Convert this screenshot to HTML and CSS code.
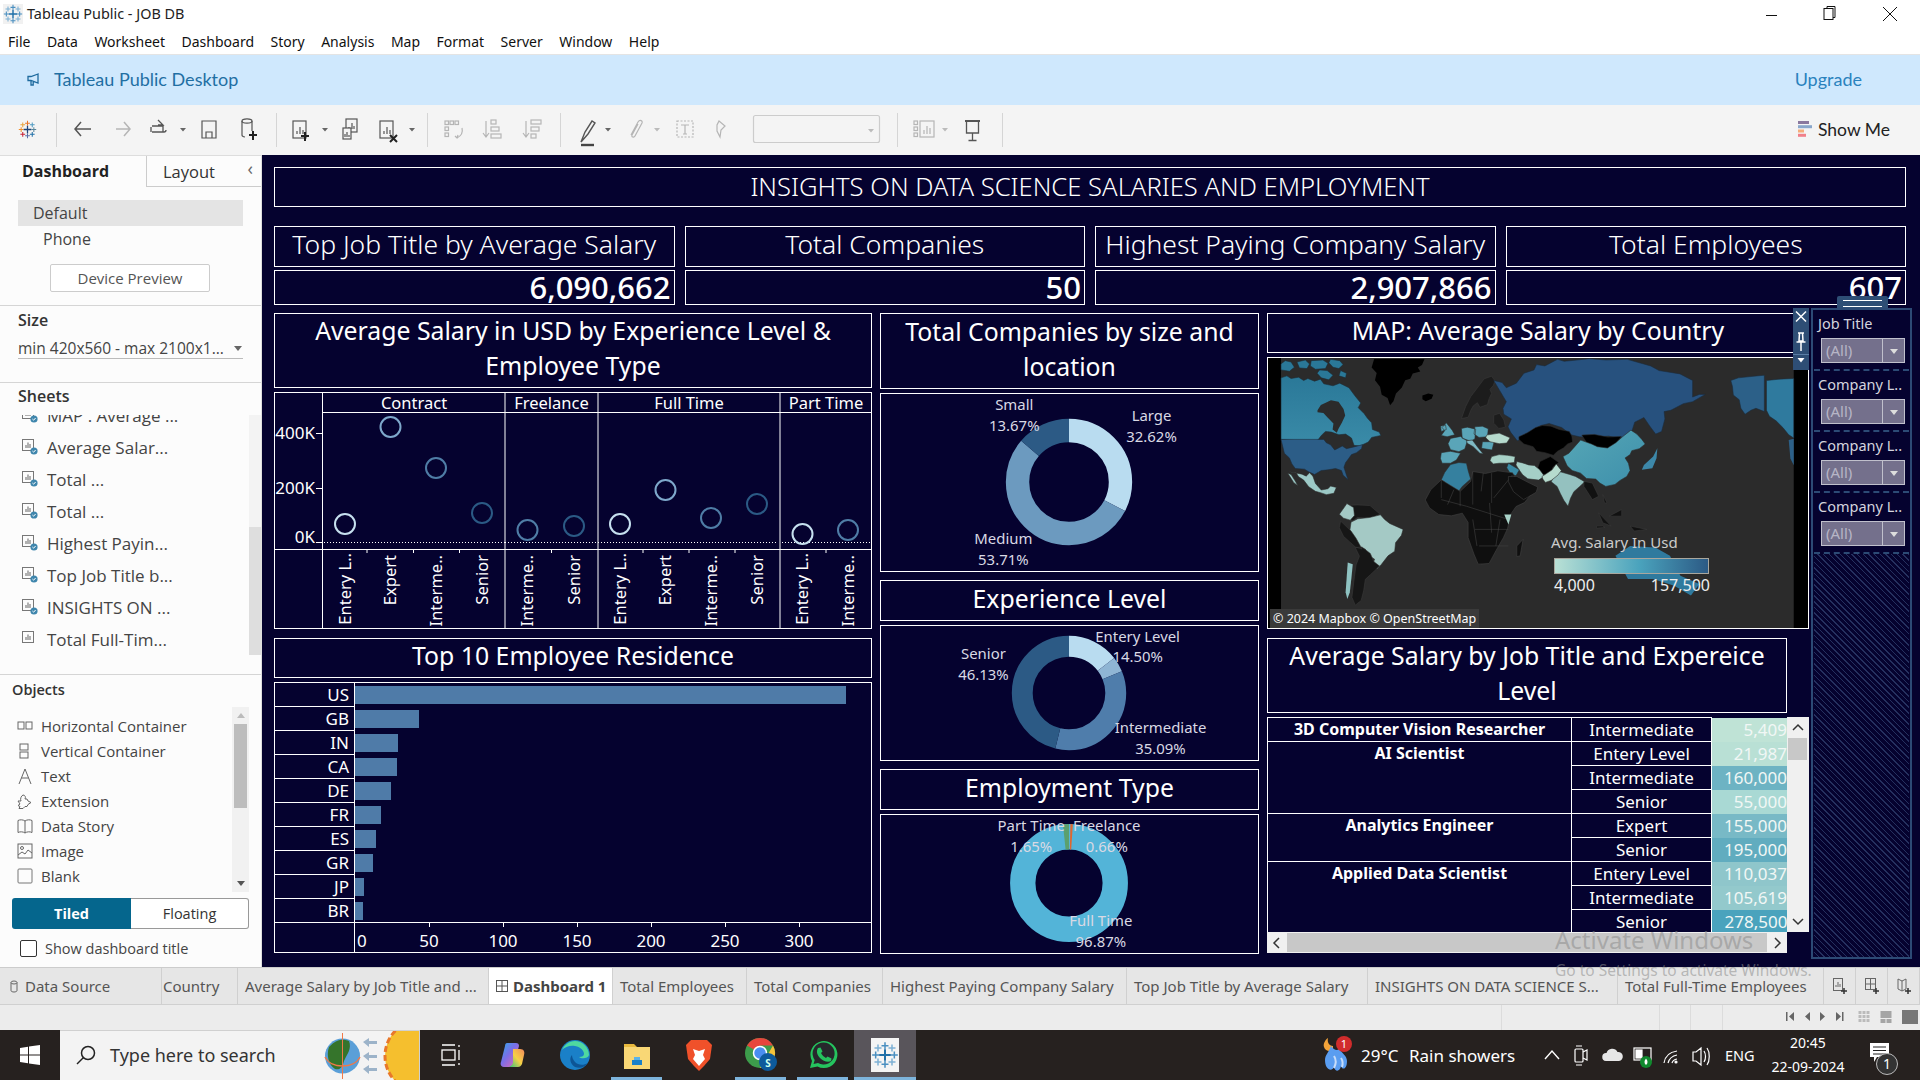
FILE: index.html
```html
<!DOCTYPE html>
<html lang="en">
<head>
<meta charset="utf-8">
<title>Tableau Public - JOB DB</title>
<link rel="stylesheet" href="styles.css">
</head>
<body>
<svg class="defs" width="0" height="0">
  <symbol id="logo" viewBox="0 0 24 24">
    <g fill="none" stroke-width="1.3">
      <path d="M12 7v10M7 12h10" stroke="#1f6fa8" stroke-width="1.700"/>
      <path d="M12 1v6M9 4h6M12 17v6M9 20h6M1 12h6M4 9v6M17 12h6M20 9v6" stroke="#4a8fc0"/>
      <path d="M6 3v6M3 6h6M18 3v6M15 6h6M6 15v6M3 18h6M18 15v6M15 18h6" stroke="#7db0d4"/>
    </g>
  </symbol>
  <symbol id="logoc" viewBox="0 0 24 24">
    <g fill="none" stroke-width="1.300">
      <path d="M12 7v10M7 12h10" stroke="#1f447a" stroke-width="1.600"/>
      <path d="M12 1v6M9 4h6" stroke="#e8762b"/>
      <path d="M12 17v6M9 20h6" stroke="#5a6ea8"/>
      <path d="M1 12h6M4 9v6" stroke="#f28e2b"/>
      <path d="M17 12h6M20 9v6" stroke="#59879b"/>
      <path d="M6 3v6M3 6h6" stroke="#e8a33d"/>
      <path d="M18 3v6M15 6h6" stroke="#4e9ac2"/>
      <path d="M6 15v6M3 18h6" stroke="#c72035"/>
      <path d="M18 15v6M15 18h6" stroke="#1f6fa8"/>
    </g>
  </symbol>
  <symbol id="sheet" viewBox="0 0 18 18">
    <rect x="1.500" y="1.500" width="11" height="11" fill="none" stroke="#777"/>
    <path d="M5 10V7M7 10V4.500M9 10V6" stroke="#666" stroke-width="1"/>
    <circle cx="13" cy="13" r="3.600" fill="#3f86ad"/>
    <path d="M11.400 13l1.200 1.200 2-2.200" stroke="#fff" stroke-width="1" fill="none"/>
  </symbol>
  <symbol id="sheetplain" viewBox="0 0 18 18">
    <rect x="1.500" y="1.500" width="11" height="11" fill="none" stroke="#777"/>
    <path d="M5 10V7M7 10V4.500M9 10V6" stroke="#666" stroke-width="1"/>
  </symbol>
</svg>

<header class="titlebar">
  <svg class="tb-logo"><use href="#logo"/></svg>
  <span class="tb-title">Tableau Public - JOB DB</span>
  <div class="winbtns">
    <svg width="160" height="20" viewBox="0 0 160 20" fill="none" stroke="#111" stroke-width="1"><path d="M16 11.500h11"/><rect x="74" y="4.500" width="9" height="11"/><path d="M77 4V2.500h8v11h-2"/><path d="M133 3l14 14M147 3l-14 14"/></svg>
  </div>
</header>

<nav class="menubar">
  <span>File</span><span>Data</span><span>Worksheet</span><span>Dashboard</span><span>Story</span><span>Analysis</span><span>Map</span><span>Format</span><span>Server</span><span>Window</span><span>Help</span>
</nav>

<div class="banner">
  <svg class="megaphone" viewBox="0 0 14 14" width="14" height="14" fill="none" stroke="#1e6a9e" stroke-width="1.300"><path d="M12 2L5 4.500H2v4h3l7 2.500zM5 8.500V13H7.200V9.200"/></svg>
  <span class="banner-text">Tableau Public Desktop</span>
  <span class="upgrade">Upgrade</span>
</div>

<div class="toolbar">
  <svg class="tools" width="1010" height="50" viewBox="0 1 1010 50">
    <use href="#logoc" x="18" y="16" width="19" height="19"/>
    <g stroke="#d5d5d5"><path d="M56.500 9v34M276.500 9v34M427.500 9v34M560.500 9v34M897.500 9v34M1002.500 9v34"/></g>
    <g fill="none" stroke="#555" stroke-width="1.500">
      <path d="M75 25h16M81 18l-6 7 6 7"/>
      <path d="M152 22h11v6M152 28h12a2 2 0 0 0 2-2M151 28v-5M158 16l5 5-5 0" stroke-width="1.300"/>
      <path d="M202 17h14v17h-14zM206 34v-6h6v6" stroke-width="1.200"/>
      <ellipse cx="247" cy="17" rx="5" ry="2.200" stroke-width="1.200"/><path d="M242 17v14a5 2 0 0 0 3 2M252 17v10" stroke-width="1.200"/>
    </g>
    <path d="M249 31h8M253 27v9" stroke="#222" stroke-width="2"/>
    <g fill="none" stroke="#555" stroke-width="1.200">
      <rect x="293" y="17" width="13" height="17"/><path d="M297 30v-3M300 30v-7M303 30v-4"/>
      <rect x="346" y="15" width="11" height="13"/><path d="M349 25v-2M352 25v-6M354 25v-3"/><rect x="343" y="24" width="8" height="11" fill="#f4f4f4"/><path d="M345 33v-3M347 33v-5M349 33v-2"/>
      <rect x="380" y="17" width="13" height="17"/><path d="M384 30v-3M387 30v-7M390 30v-4"/>
    </g>
    <path d="M301 32h8M305 28v9" stroke="#222" stroke-width="2"/>
    <path d="M390 31l7 7M397 31l-7 7" stroke="#222" stroke-width="2"/>
    <g fill="#666">
      <path d="M180 24h6l-3 3.500zM322 24h6l-3 3.500zM409 24h6l-3 3.500zM605 24h6l-3 3.500z"/>
    </g>
    <g fill="#bbb"><path d="M654 24h6l-3 3.500zM942 24h6l-3 3.500z"/></g>
    <g fill="none" stroke="#b5b5b5" stroke-width="1.200">
      <path d="M116 25h14M124 18l6 7-6 7" stroke-width="1.500"/>
      <rect x="445" y="17" width="3.500" height="3.500"/><rect x="450" y="17" width="3.500" height="3.500"/><rect x="455" y="17" width="3.500" height="3.500"/>
      <rect x="445" y="23" width="3.500" height="3.500"/><rect x="445" y="29" width="3.500" height="3.500"/>
      <path d="M462 24c1 4-1 8-5 10M455 32l2 2 1-3"/>
      <path d="M486 17v15M483 29l3 4 3-4"/><rect x="491" y="16" width="5" height="4"/><rect x="491" y="23" width="8" height="4"/><rect x="491" y="30" width="10" height="4"/>
      <path d="M526 17v15M523 29l3 4 3-4"/><rect x="531" y="16" width="10" height="4"/><rect x="531" y="23" width="8" height="4"/><rect x="531" y="30" width="5" height="4"/>
      <path d="M631 31l7-13c2-3 5-1 4 1l-7 13c-1 2-4 1-3-1l6-11"/>
      <rect x="677" y="17" width="16" height="16" stroke-dasharray="2 1.500"/><path d="M681 21h8M685 21v9M683 30h4"/>
      <path d="M719 17l6 5-4 4-1 7-3-6 0-6z"/>
      <rect x="753.500" y="11.500" width="126" height="27" rx="2" fill="#f4f4f4" stroke="#ccc"/>
      <rect x="914" y="17" width="3.500" height="3.500"/><rect x="914" y="23" width="3.500" height="3.500"/><rect x="914" y="29" width="3.500" height="3.500"/>
      <rect x="920" y="17" width="14" height="16"/><path d="M924 30v-4M927 30v-8M930 30v-6"/>
    </g>
    <path d="M868 25h6l-3 3.500z" fill="#bbb"/>
    <path d="M581 38l4-10 7-11 3 2-7 11z" fill="none" stroke="#555" stroke-width="1.400"/>
    <path d="M581 41h13" stroke="#444" stroke-width="2.400"/>
    <g fill="none" stroke="#555" stroke-width="1.300"><path d="M966.500 18v11h12V18M972.500 29v7M968.500 36.500h8"/></g>
    <path d="M965 17h15" stroke="#555" stroke-width="2"/>
  </svg>
  <div class="showme">
    <svg width="14" height="16" viewBox="0 0 14 16"><rect width="11" height="3" y="0" fill="#8a789e"/><rect width="14" height="3" y="4.200" fill="#8aa7cb"/><rect width="6" height="3" y="8.500" fill="#f5ad7a"/><rect width="8" height="3" y="12.800" fill="#f1808a"/></svg>
    <span>Show Me</span>
  </div>
</div>

<main class="main">
  <aside class="sidebar">
    <div class="sb-tabs">
      <div class="sb-tab active">Dashboard</div>
      <div class="sb-tab">Layout<span class="chev">‹</span></div>
    </div>
    <section class="sb-device">
      <div class="dev-row selected">Default</div>
      <div class="dev-row phone">Phone</div>
      <div class="dev-btn">Device Preview</div>
    </section>
    <section class="sb-size">
      <h3>Size</h3>
      <div class="size-select"><span>min 420x560 - max 2100x1...</span><i class="caret"></i></div>
    </section>
    <section class="sb-sheets">
      <h3>Sheets</h3>
      <div class="sheet-wrap">
        <ul class="sheet-list">
          <li><svg><use href="#sheet"/></svg>MAP : Average ...</li>
          <li><svg><use href="#sheet"/></svg>Average Salar...</li>
          <li><svg><use href="#sheet"/></svg>Total ...</li>
          <li><svg><use href="#sheet"/></svg>Total ...</li>
          <li><svg><use href="#sheet"/></svg>Highest Payin...</li>
          <li><svg><use href="#sheet"/></svg>Top Job Title b...</li>
          <li><svg><use href="#sheet"/></svg>INSIGHTS ON ...</li>
          <li><svg><use href="#sheetplain"/></svg>Total Full-Tim...</li>
        </ul>
        <div class="sheet-scroll"><div class="sheet-thumb"></div></div>
      </div>
    </section>
    <section class="sb-objects">
      <h3>Objects</h3>
      <div class="obj-wrap">
        <ul class="obj-list">
          <li><svg viewBox="0 0 16 16" fill="none" stroke="#666"><rect x="1" y="4" width="6" height="7"/><rect x="9" y="4" width="6" height="7"/></svg>Horizontal Container</li>
          <li><svg viewBox="0 0 16 16" fill="none" stroke="#666"><rect x="3" y="1" width="8" height="6"/><rect x="3" y="9" width="8" height="6"/></svg>Vertical Container</li>
          <li><svg viewBox="0 0 16 16" fill="none" stroke="#666"><path d="M2 16L8 1l6 15M4.500 10h7"/></svg>Text</li>
          <li><svg viewBox="0 0 16 16" fill="none" stroke="#666"><path d="M1 8h3c-1-2 0-5 2-6 2 0 3 2 2 4h2l1 2 3 1.500-3 2-1 2H8l-2 2H2l1-2-2-1 2-1.500z"/></svg>Extension</li>
          <li><svg viewBox="0 0 16 16" fill="none" stroke="#666"><path d="M8 3C6 1.500 3 1.500 1 2.500v12c2-1 5-1 7 .5 2-1.500 5-1.500 7-.5v-12C13 1.500 10 1.500 8 3zv12"/></svg>Data Story</li>
          <li><svg viewBox="0 0 16 16" fill="none" stroke="#666"><rect x="1" y="1" width="14" height="14"/><circle cx="5" cy="5" r="1.500"/><path d="M1 12l4-3 3 2 3-4 4 3"/></svg>Image</li>
          <li><svg viewBox="0 0 16 16" fill="none" stroke="#777"><rect x="1" y="1" width="14" height="14" rx="1"/></svg>Blank</li>
        </ul>
        <div class="obj-scroll"><i class="up"></i><div class="obj-thumb"></div><i class="down"></i></div>
      </div>
      <div class="toggle"><div class="tog on">Tiled</div><div class="tog">Floating</div></div>
      <label class="check"><span class="cbox"></span>Show dashboard title</label>
    </section>
  </aside>

  <div class="canvas">
    <div class="box head-title">INSIGHTS ON DATA SCIENCE SALARIES AND EMPLOYMENT</div>

    <div class="kpis">
      <div class="kpi"><div class="box kpi-t">Top Job Title by Average Salary</div><div class="box kpi-v">6,090,662</div></div>
      <div class="kpi"><div class="box kpi-t">Total Companies</div><div class="box kpi-v">50</div></div>
      <div class="kpi"><div class="box kpi-t">Highest Paying Company Salary</div><div class="box kpi-v">2,907,866</div></div>
      <div class="kpi"><div class="box kpi-t">Total Employees</div><div class="box kpi-v">607</div></div>
    </div>

    <div class="zones">
      <div class="col">
        <div class="box ttl t75">Average Salary in USD by Experience Level &amp; Employee Type</div>
        <div class="scatter">
          <svg width="598" height="237" viewBox="0 0 598 237" class="chart">
            <g stroke="#fff" stroke-width="1" fill="none">
              <rect x="0.500" y="0.500" width="597" height="236"/>
              <path d="M48.500 0v237M231 0v237M324 0v237M506 0v237M0 157.500h598M48.500 20.500H598"/>
              <path d="M42 41.500h6M42 96.500h6M42 150.500h6"/>
              <path d="M93 157v4M139.500 157v4M185.500 157v4M277.500 157v4M369 157v4M415 157v4M461 157v4M552 157v4"/>
              <path d="M50 150.500h181M231 150.500h93M324 150.500h180M508 150.500h90" stroke-dasharray="1 2"/>
            </g>
            <g class="c-head">
              <text x="140" y="17">Contract</text><text x="277.500" y="17">Freelance</text><text x="415" y="17">Full Time</text><text x="552" y="17">Part Time</text>
            </g>
            <g class="c-y">
              <text x="41" y="47">400K</text><text x="41" y="102">200K</text><text x="41" y="151">0K</text>
            </g>
            <g fill="none" stroke-width="2">
              <circle cx="71" cy="132" r="10" stroke="#c6e0ef"/>
              <circle cx="116.500" cy="35" r="10" stroke="#7ea8cb"/>
              <circle cx="162" cy="76" r="10" stroke="#4f7da6"/>
              <circle cx="208" cy="121" r="10" stroke="#2b5a85"/>
              <circle cx="253.500" cy="138" r="10" stroke="#4f7da6"/>
              <circle cx="300" cy="134" r="10" stroke="#2b5a85"/>
              <circle cx="346" cy="132" r="10" stroke="#c6e0ef"/>
              <circle cx="391.500" cy="98" r="10" stroke="#7ea8cb"/>
              <circle cx="437" cy="126" r="10" stroke="#4f7da6"/>
              <circle cx="483" cy="112" r="10" stroke="#2b5a85"/>
              <circle cx="528.500" cy="142" r="10" stroke="#c6e0ef"/>
              <circle cx="574" cy="138" r="10" stroke="#4f7da6"/>
            </g>
            <g class="c-rot">
              <text transform="translate(77 161) rotate(-90)">Entery L..</text>
              <text transform="translate(122 163) rotate(-90)">Expert</text>
              <text transform="translate(168 163) rotate(-90)">Interme..</text>
              <text transform="translate(214 163) rotate(-90)">Senior</text>
              <text transform="translate(259 163) rotate(-90)">Interme..</text>
              <text transform="translate(306 163) rotate(-90)">Senior</text>
              <text transform="translate(352 161) rotate(-90)">Entery L..</text>
              <text transform="translate(397 163) rotate(-90)">Expert</text>
              <text transform="translate(443 163) rotate(-90)">Interme..</text>
              <text transform="translate(489 163) rotate(-90)">Senior</text>
              <text transform="translate(534 161) rotate(-90)">Entery L..</text>
              <text transform="translate(580 163) rotate(-90)">Interme..</text>
            </g>
          </svg>
        </div>
        <div class="box ttl t40 mt9">Top 10 Employee Residence</div>
        <div class="box bars">
          <div class="bar-rows">
            <div class="bar-row"><span class="bl">US</span><span class="bt"><i style="width:491px"></i></span></div>
            <div class="bar-row"><span class="bl">GB</span><span class="bt"><i style="width:64px"></i></span></div>
            <div class="bar-row"><span class="bl">IN</span><span class="bt"><i style="width:43px"></i></span></div>
            <div class="bar-row"><span class="bl">CA</span><span class="bt"><i style="width:42px"></i></span></div>
            <div class="bar-row"><span class="bl">DE</span><span class="bt"><i style="width:36px"></i></span></div>
            <div class="bar-row"><span class="bl">FR</span><span class="bt"><i style="width:26px"></i></span></div>
            <div class="bar-row"><span class="bl">ES</span><span class="bt"><i style="width:21px"></i></span></div>
            <div class="bar-row"><span class="bl">GR</span><span class="bt"><i style="width:18px"></i></span></div>
            <div class="bar-row"><span class="bl">JP</span><span class="bt"><i style="width:9px"></i></span></div>
            <div class="bar-row"><span class="bl">BR</span><span class="bt"><i style="width:8px"></i></span></div>
          </div>
          <div class="bar-axis">
            <span class="axis-spacer"></span>
            <span class="tick zero">0</span><span class="tick"><b></b>50</span><span class="tick"><b></b>100</span><span class="tick"><b></b>150</span><span class="tick"><b></b>200</span><span class="tick"><b></b>250</span><span class="tick"><b></b>300</span>
          </div>
        </div>
      </div>

      <div class="col mid">
        <div class="box ttl t76">Total Companies by size and location</div>
        <div class="box donut d1">
          <svg width="379" height="179" viewBox="880 392 379 179" class="chart">
            <g fill="none" stroke-width="23.500" transform="rotate(-90 1069 481)">
              <circle cx="1069" cy="481" r="51.750" stroke="#b9dcf0" pathLength="100" stroke-dasharray="32.620 67.380"/>
              <circle cx="1069" cy="481" r="51.750" stroke="#6c9abf" pathLength="100" stroke-dasharray="53.710 46.290" stroke-dashoffset="-32.620"/>
              <circle cx="1069" cy="481" r="51.750" stroke="#2c5a85" pathLength="100" stroke-dasharray="13.670 86.330" stroke-dashoffset="-86.330"/>
            </g>
            <g class="c-lab">
              <text x="1014" y="410">Small</text><text x="1014" y="431">13.67%</text>
              <text x="1152" y="421">Large</text><text x="1152" y="442">32.62%</text>
              <text x="1003" y="544">Medium</text><text x="1003" y="565">53.71%</text>
            </g>
          </svg>
        </div>
        <div class="box ttl t41 mt9">Experience Level</div>
        <div class="box donut d2">
          <svg width="379" height="136" viewBox="880 624 379 136" class="chart">
            <g fill="none" stroke-width="21" transform="rotate(-90 1069 692)">
              <circle cx="1069" cy="692" r="47" stroke="#b9dcf0" pathLength="100" stroke-dasharray="14.500 85.500"/>
              <circle cx="1069" cy="692" r="47" stroke="#8fb5d4" pathLength="100" stroke-dasharray="4.280 95.720" stroke-dashoffset="-14.500"/>
              <circle cx="1069" cy="692" r="47" stroke="#4f7dab" pathLength="100" stroke-dasharray="35.090 64.910" stroke-dashoffset="-18.780"/>
              <circle cx="1069" cy="692" r="47" stroke="#2c5a85" pathLength="100" stroke-dasharray="46.130 53.870" stroke-dashoffset="-53.870"/>
            </g>
            <g class="c-lab">
              <text x="1138" y="642">Entery Level</text><text x="1138" y="662">14.50%</text>
              <text x="983" y="659">Senior</text><text x="983" y="680">46.13%</text>
              <text x="1161" y="733">Intermediate</text><text x="1161" y="754">35.09%</text>
            </g>
          </svg>
        </div>
        <div class="box ttl t41 mt9">Employment Type</div>
        <div class="box donut d3">
          <svg width="379" height="140" viewBox="880 813 379 140" class="chart">
            <g fill="none" stroke-width="25.500" transform="rotate(-90 1069 882)">
              <circle cx="1069" cy="882" r="46.500" stroke="#53b4d8"/>
              <circle cx="1069" cy="882" r="46.500" stroke="#e0662f" pathLength="100" stroke-dasharray="0.660 99.340" stroke-dashoffset="-0.400"/>
              <circle cx="1069" cy="882" r="46.500" stroke="#5ba06e" pathLength="100" stroke-dasharray="1.650 98.350" stroke-dashoffset="-98.350"/>
            </g>
            <g class="c-lab">
              <text x="1031" y="831">Part Time</text><text x="1031" y="852">1.65%</text>
              <text x="1107" y="831">Freelance</text><text x="1107" y="852">0.66%</text>
              <text x="1101" y="926">Full Time</text><text x="1101" y="947">96.87%</text>
            </g>
          </svg>
        </div>
      </div>

      <div class="col">
        <div class="box ttl t40">MAP: Average Salary by Country</div>
        <div class="box map">
          <svg class="mapsvg" viewBox="17 172 1287 816" preserveAspectRatio="none" stroke-width="1.500" stroke-linejoin="round">
            <defs><linearGradient id="cana" x1="0" y1="0" x2="0" y2="1"><stop offset="0" stop-color="#2a7898"/><stop offset="1" stop-color="#3a8ba8"/></linearGradient><linearGradient id="chn" x1="0" y1="0" x2="1" y2="1"><stop offset="0" stop-color="#57a7b6"/><stop offset="1" stop-color="#3d8fab"/></linearGradient></defs>
            <rect x="17" y="172" width="1287" height="816" fill="#000"/>
            <rect x="48" y="172" width="1222" height="816" fill="#2b2b2b"/>
            <path fill="#000" d="M270 175h120l-6 18-10 8 6 12-18 6-6 16-12 4-8 22-14 18-6 24-8 12-6-22-14-10-4-24-12-20 4-22-12-16zM385 285l14-6 12 4-4 12-14 8-8-6z"/>
            <path fill="url(#cana)" stroke="#1c2a35" d="M48 232l14-6 10 8 18-4 12 10 10-6 16 8 14-6 8 14 22 6 16-8 22 14 14 24 14 22-6 14 14 18 8 14 10 14 2 20 16 8 4 10-22 6-8 14-20 12-14-2-6-22-14-12-16 2-18-8-14-2-10 12-8 14-14 6L48 418z"/>
            <path fill="#2b2b2b" d="M135 330l8-16 14-8 10-6 18 4 12 22 4 20-8 22-8 18-4 12-10-10 2-18-14-18-10-14-14-2z"/>
            <path fill="#2a7898" stroke="#1c2a35" d="M48 190l10-10 14 4 8 16-12 12-20-4zM86 184l20-6 10 12-6 14-18-2zM120 180l28-2 12 10-6 16-24 2-12-10zM166 176l22 4 8 12-10 12-14-4-10-14zM140 208l18 2 14 14-10 14-18-6-10-14zM190 210l14 8-2 14-16-6z"/>
            <path fill="#2c5d87" stroke="#1a2a3a" d="M48 418h102l6 10 10 6 10 16 18-12 10 8 20-6 18-6-2 12-12 12-12 6-8 14-6 10-4 14 6 24 4 14-12-14-4-14-14-6-18 4-16 2-16 12-14-8-10-8-22-2-8-14-6-18-12-14z"/>
            <path fill="#9cc9c6" stroke="#2b2b2b" d="M65 515l33 8 10 6 8-10 8 10 6 22 14 20 16-4 6-8 14 4-6 18-18 4-14-6-12-4-16-14-12-20-12-10-6-12zM64 520l8 4 10 20 6 14-10-10-8-16z"/>
            <path fill="#161616" stroke="#3a3a3a" d="M200 618l30-2 30 2 24 26-14 8-10 4-30-2-10 10-12-4-8-20z"/>
            <path fill="#a4c9c5" stroke="#2b2b2b" d="M195 630l10-18 16 12 2 24-10 14-16-6-10-12z"/>
            <path fill="#a4c9c5" stroke="#2b2b2b" d="M215 668l16-10 28-4 26-8 10 14 12 12 32 18 -4 18-14 22-2 26-16 14-16 26-10 14-12-8 6-22-18-14-4-16-24-8-8-22-6-18z"/>
            <path fill="#161616" stroke="#3a3a3a" d="M190 665l25 30 12 22 14 32-16-6-14-16-14-16-10-26zM225 745l16-2 20 20 8 24 14 14-22 26-12 14-4 34-6 30-14 14-8-24 6-62 4-36 8-26z"/>
            <path fill="#8fc3c2" d="M207 790l12 5-3 40-4 45-6 20-4-20z"/>
            <path fill="#1c1c1c" stroke="#3a3a3a" d="M478 355l10-36 12-30 18-30 14-24 18-8 8 14-4 14-8 12 4 12-6 16-4 18-18 8-6-14-10 10-6 14-6 20z"/>
            <path fill="#1c1c1c" stroke="#3a3a3a" d="M555 345l14-6 10 20 4 22-16 4-12-16z"/>
            <path fill="#27517e" stroke="#1a2a3a" d="M555 240l20 6 10 16 24-14 18-30 24-10 6-16 20 4 30-20 16 6 60-8 40 4 50-2 56 20 20 14 50 10 30 20 0 50 16-8 14 0-30 22-22 6-30 20-16 4 2 22-8 38-14 8-14-24-14-26-22 14-6 24-14 20-22 4-20-6-40 4-30-2-20-6-22-22-30-12-20 6-24 18-20 22-12 6-16-26-6-16 8-24-18-14-2-18 8-20z"/>
            <path fill="#2c6088" stroke="#1a2a3a" d="M1120 240l18-8 30-4 32-4v110l-20-10-12 6-14 12-10-18-4-26-14-14-2-26z"/>
            <path fill="#2f7a9e" stroke="#1a2a3a" d="M1205 240l30-4 35-2v180l-12-10-14-22-16-20-16-14-7-18z"/>
            <path fill="#2c6088" d="M1258 420l12-4v80l-8-20z"/>
            <path fill="#000" stroke="#2b2b2b" d="M615 410l20-12 20-16 16-6 20 2 20 10 24 6 6 14 2 18-12 6-10 12-14 10-10 12-20-8-20-4-8-14-22-8-12-14z"/>
            <path fill="#000" stroke="#2b2b2b" d="M765 405l30-2 32 8 32-2-12 20-18 18-28-4-24-14z"/>
            <path fill="#000" stroke="#2b2b2b" d="M665 485l25-15 20 18-14 14-4 18-24 6-8-22z"/>
            <path fill="url(#chn)" stroke="#2b2b2b" d="M720 470l14-10 14-20 14-20 26 12 14 8 24 4 20-16 16-18 20-20 14 12 12 16 8 14-14 14-18 6-4 12-12 10 8 16 4 22-8 18-16 12-12 12-22 6-14-10-10-12-22-2-14-16-20-8-12-14z"/>
            <path fill="#3d88a9" d="M935 470l10-25-2 30-10 30-25 5 5-15z"/>
            <path fill="#94c1bf" stroke="#2b2b2b" d="M700 510l14 6 22 8 14 6 22 16-12 14-14 16-8 20-6 24-10-18-8-20-8-22-14-14 6-14z"/>
            <path fill="#a5cfc7" stroke="#2b2b2b" d="M610 485l14 4 14 6 14 2 12 12 12 20-14 12-26-4-12-12-8-14-8-16z"/>
            <path fill="#b6dbce" stroke="#2b2b2b" d="M670 530l10-8 14-12 10-18 12 20-8 14-16 16-14 6-6-10z"/>
            <path fill="#a8d2c7" stroke="#2b2b2b" d="M550 470l18-6 20 2 18 4-2 18-18 2-18 0-14 2-8-10z"/>
            <path fill="#35809f" stroke="#2b2b2b" d="M430 540l8-22 14-24 20-6 18 2 4 22 6 26-20 22-8 14-18-12z"/>
            <path fill="#5aa5b8" stroke="#2b2b2b" d="M430 458l22-4 24 6-10 20-14 10-20 0-4-14zM452 415l24-6 16 14-6 24-14 8-20-6-6-18zM442 368l14 22 6 14-18 6-14-4 8-14-6-10zM478 385l14-4 20 6-2 30-10 6-20-8zM428 378l12-4 2 14-12 6zM510 380l18-2 14 8-2 24-20 2-12-10zM528 425l28 0-5 25-25-5z"/>
            <path fill="#7fb9c4" stroke="#2b2b2b" d="M490 422l14-2 12 20 14 22-8-2-16-20-14-10z"/>
            <path fill="#b6dbce" stroke="#2b2b2b" d="M538 405l30-6 26 14-8 16-18 2-22-6-10-12z"/>
            <path fill="#3a8aa5" stroke="#2b2b2b" d="M590 490l26 20-8 18-14-8-8-16z"/>
            <path fill="#0f0f0f" stroke="#444" d="M405 570l25-30 45 35 25-30 5-30 30 6 30-8 35 6 14 34 16 36 14-4-16 24-20 12-14 26-6 40-10 28-18 40-16 38-26 2-10-30-14-50 0-46-14-28-26 8-30-4-22-20-10-24z"/>
            <path fill="none" stroke="#444" d="M430 540l0 55M475 575l0 45M505 515l0 100M550 520l0 90M600 525l-45 70M490 620l100 40M510 690l80 0M520 740l70 0M430 600l60 20M545 610l5 90M505 660l10 80M570 660l-10 80M460 570l-15 45M530 520l-5 55"/>
            <path fill="#0f0f0f" stroke="#444" d="M590 530l20 0 30 20 20 12-4 16-30 22-24-24-12-30z"/>
            <path fill="#0f0f0f" stroke="#444" d="M610 740l15-20-7 50-8 2z"/>
            <path fill="#a8d2c7" d="M580 645l17 0-7 30z"/>
            <path fill="#111" stroke="#3a3a3a" d="M770 545l20 5 15 40-15 10-20-40zM805 640l30 40-20-10zM830 650l30-20 0 20zM880 680l40 10-30 5zM800 680l15 0 5 4-20 2zM815 585l10 25-6 0z"/>
            <path fill="#2f7a9e" d="M845 770l35-30 60 5 35 25 25 60 45 25-20 35-40-30-50-20-60 0z"/>
          </svg>
          <div class="legend">
            <div class="leg-title">Avg. Salary In Usd</div>
            <div class="leg-grad"></div>
            <div class="leg-labels"><span>4,000</span><span>157,500</span></div>
          </div>
          <div class="attrib">© 2024 Mapbox © OpenStreetMap</div>
        </div>
        <div class="box ttl t75 w520 mt9">Average Salary by Job Title and Expereice Level</div>
        <div class="tblwrap">
          <div class="tblleft">
            <div class="tblclip">
              <table>
                <colgroup><col class="c1"><col class="c2"><col class="c3"></colgroup>
                <tr><th>3D Computer Vision Researcher</th><td>Intermediate</td><td class="num n1">5,409</td></tr>
                <tr><th rowspan="3">AI Scientist</th><td>Entery Level</td><td class="num n2">21,987</td></tr>
                <tr><td>Intermediate</td><td class="num n3">160,000</td></tr>
                <tr><td>Senior</td><td class="num n4">55,000</td></tr>
                <tr><th rowspan="2">Analytics Engineer</th><td>Expert</td><td class="num n5">155,000</td></tr>
                <tr><td>Senior</td><td class="num n6">195,000</td></tr>
                <tr><th rowspan="3">Applied Data Scientist</th><td>Entery Level</td><td class="num n7">110,037</td></tr>
                <tr><td>Intermediate</td><td class="num n8">105,619</td></tr>
                <tr><td>Senior</td><td class="num n9">278,500</td></tr>
              </table>
            </div>
            <div class="hscroll">
              <svg width="20" height="21" viewBox="0 0 20 21"><path d="M12 6l-5 5 5 5" fill="none" stroke="#333" stroke-width="1.500"/></svg>
              <div class="hthumb"></div>
              <svg width="20" height="21" viewBox="0 0 20 21"><path d="M8 6l5 5-5 5" fill="none" stroke="#333" stroke-width="1.500"/></svg>
            </div>
          </div>
          <div class="vscroll">
            <svg width="22" height="21" viewBox="0 0 22 21"><path d="M6 13l5-5 5 5" fill="none" stroke="#333" stroke-width="1.500"/></svg>
            <div class="vthumb"></div>
            <svg width="22" height="21" viewBox="0 0 22 21"><path d="M6 8l5 5 5-5" fill="none" stroke="#333" stroke-width="1.500"/></svg>
          </div>
        </div>
      </div>
    </div>

    <div class="float-tab"></div>
    <div class="float-btns">
      <svg width="16" height="62" viewBox="0 0 16 62" fill="none" stroke="#fff"><path d="M3 3.500l10 10M13 3.500l-10 10" stroke-width="1.500"/><path d="M5 25h6M6.500 25l-.5 8h4l-.5-8M3.500 34h9M8 34v9" stroke-width="1.500"/><path d="M0 46.500h16" stroke="#5a7da5"/><path d="M4.500 50h7l-3.500 4.500z" fill="#fff" stroke="none"/></svg>
    </div>
    <aside class="filters">
      <div class="filter"><div class="f-l">Job Title</div><div class="f-i"><span class="f-all">(All)</span><span class="f-d"><i></i></span></div></div>
      <div class="filter"><div class="f-l">Company L..</div><div class="f-i"><span class="f-all">(All)</span><span class="f-d"><i></i></span></div></div>
      <div class="filter"><div class="f-l">Company L..</div><div class="f-i"><span class="f-all">(All)</span><span class="f-d"><i></i></span></div></div>
      <div class="filter"><div class="f-l">Company L..</div><div class="f-i"><span class="f-all">(All)</span><span class="f-d"><i></i></span></div></div>
      <div class="hatch"></div>
    </aside>
  </div>
</main>

<div class="tabs">
  <div class="tab t1"><svg width="8" height="13" viewBox="0 0 8 13" fill="none" stroke="#666"><ellipse cx="4" cy="2.500" rx="3" ry="1.500"/><path d="M1 2.500v8c0 2 6 2 6 0v-8"/></svg>Data Source</div>
  <div class="tab t2">Country</div>
  <div class="tab t3">Average Salary by Job Title and ...</div>
  <div class="tab t4"><svg width="12" height="12" viewBox="0 0 12 12" fill="none" stroke="#555"><rect x="0.500" y="0.500" width="11" height="11"/><path d="M6 0v12M0 6h12"/></svg>Dashboard 1</div>
  <div class="tab t5">Total Employees</div>
  <div class="tab t6">Total Companies</div>
  <div class="tab t7">Highest Paying Company Salary</div>
  <div class="tab t8">Top Job Title by Average Salary</div>
  <div class="tab t9">INSIGHTS ON DATA SCIENCE S...</div>
  <div class="tab t10">Total Full-Time Employees</div>
  <div class="tab-ic"><svg width="16" height="18" viewBox="0 0 16 18" fill="none" stroke="#666"><rect x="1.500" y="1.500" width="9" height="12"/><path d="M4 10V8M6 10V5M8 10V7"/><path d="M9 14h6M12 11v6" stroke="#333" stroke-width="1.500"/></svg></div>
  <div class="tab-ic"><svg width="16" height="18" viewBox="0 0 16 18" fill="none" stroke="#666"><rect x="1.500" y="1.500" width="10" height="11"/><path d="M6.500 1v11M1 7h11"/><path d="M9 14h6M12 11v6" stroke="#333" stroke-width="1.500"/></svg></div>
  <div class="tab-ic"><svg width="16" height="18" viewBox="0 0 16 18" fill="none" stroke="#666"><path d="M2 2l4 2 4-2v10l-4 2-4-2zM6 4v10"/><path d="M9 14h6M12 11v6" stroke="#333" stroke-width="1.500"/></svg></div>
</div>

<div class="status">
  <i class="sdiv s1"></i><i class="sdiv s2"></i><i class="sdiv s3"></i><i class="sdiv s4"></i>
  <svg class="nav" width="130" height="25" viewBox="0 0 130 25">
    <g fill="#666"><path d="M16 7h1.500v9H16zM24 7v9l-5-4.500zM40 7v9l-5-4.500zM50 7v9l5-4.500zM66 7v9l5-4.500zM72 7h1.500v9H72z"/></g>
    <g fill="#bbb"><rect x="88.500" y="6" width="3" height="3"/><rect x="92.500" y="6" width="3" height="3"/><rect x="96.500" y="6" width="3" height="3"/><rect x="88.500" y="10" width="3" height="3"/><rect x="92.500" y="10" width="3" height="3"/><rect x="96.500" y="10" width="3" height="3"/><rect x="88.500" y="14" width="3" height="3"/><rect x="92.500" y="14" width="3" height="3"/><rect x="96.500" y="14" width="3" height="3"/></g>
    <g fill="#a5a5a5"><rect x="110.500" y="6" width="11" height="7"/><rect x="110.500" y="14" width="5" height="4"/><rect x="116.500" y="14" width="5" height="4"/></g>
  </svg>
  <span class="bigview"></span>
</div>

<footer class="taskbar">
  <div class="start"><svg width="20" height="20" viewBox="0 0 20 20" fill="#fff"><path d="M0 3l8-1.200V9.500H0zM9 1.600L20 0v9.500H9zM0 10.500h8v7.700L0 17zM9 10.500h11V20L9 18.400z"/></svg></div>
  <div class="search">
    <svg width="22" height="22" viewBox="0 0 22 22" fill="none" stroke="#222" stroke-width="1.500"><circle cx="13" cy="9" r="6.500"/><path d="M8.500 13.500L2 20"/></svg>
    <span>Type here to search</span>
    <svg class="bing" width="100" height="50" viewBox="0 0 100 50">
      <circle cx="23.500" cy="25" r="17.500" fill="#5a9fd8"/>
      <path d="M10 16c8-9 16-8 20-6 3 8-2 13-5 20-2 8-5 9-9 8-6-4-9-13-6-22z" fill="#35742b"/>
      <path d="M23.500 2v46" stroke="#f07848" stroke-width="1"/>
      <path d="M6 26c6 12 29 12 35 0" stroke="#f07848" stroke-width="1.400" fill="none"/>
      <path d="M44 11l6-4v3h8v3h-8v3zM44 25l6-4v3h8v3h-8v3zM44 38l6-4v3h8v3h-8v3z" fill="#9cb3c9"/>
      <circle cx="102" cy="25" r="36" fill="#f5bf2e" stroke="#e8782a" stroke-width="3" stroke-dasharray="6 3"/>
    </svg>
  </div>
  <div class="slot"><svg width="20" height="22" viewBox="0 0 20 22" fill="none" stroke="#fff" stroke-width="1.300"><path d="M1 1h13M1 21h13"/><rect x="1" y="6" width="13" height="10"/><path d="M18 1v2M18 6v10M18 19v2"/></svg></div>
  <div class="slot"><svg width="30" height="30" viewBox="0 0 30 30"><defs><linearGradient id="cp" x1="0" y1="0" x2="1" y2="1"><stop offset="0" stop-color="#2ea9e8"/><stop offset=".45" stop-color="#7b6ee8"/><stop offset="1" stop-color="#f06aa8"/></linearGradient><linearGradient id="cp2" x1="0" y1="1" x2="1" y2="0"><stop offset="0" stop-color="#2ec27e"/><stop offset=".5" stop-color="#f7d046"/><stop offset="1" stop-color="#f28a5c"/></linearGradient></defs><path d="M9 3h9c2 0 3 1 3 3l-5 18c-1 2-2 3-4 3H6c-3 0-4-3-3-5L7 6c0-2 1-3 2-3z" fill="url(#cp)"/><path d="M15 9h7c4 0 5 3 4 6l-2 9c-1 2-2 3-4 3h-9c2-1 3-2 4-4z" fill="url(#cp2)"/></svg></div>
  <div class="slot"><svg width="30" height="30" viewBox="0 0 30 30"><circle cx="15" cy="15" r="15" fill="#1a80c8"/><path d="M29 15C29 7 22 1 15 1 9 1 4 5 2 10c3-3 8-5 13-4 6 1 9 5 9 8 0 2-2 3-5 3 2 2 9 2 10-2z" fill="#4fd8a0"/><path d="M12 15c-3 3-2 9 3 12 5 2 10 0 13-4-5 3-10 2-13-1-2-2-3-5-3-7z" fill="#0d5596"/></svg></div>
  <div class="slot run"><svg width="28" height="30" viewBox="0 0 28 30"><path d="M1 4h10l3 3H1z" fill="#e8b93e"/><rect x="1" y="7" width="26" height="22" fill="#f9d775"/><path d="M9 20h10v5H9z" fill="#1a80c8"/><path d="M11 17h6v3h-6z" fill="#5cb3e8"/></svg></div>
  <div class="slot"><svg width="28" height="32" viewBox="0 0 28 32"><path d="M6 1h16l5 5-2 14-6 7-5 5-5-5-6-7L1 6z" fill="#f0512a"/><path d="M8 10l6 2 6-2-2 6 2 4-6 7-6-7 2-4z" fill="#fff"/></svg></div>
  <div class="slot run"><svg width="32" height="34" viewBox="0 0 32 34"><circle cx="15" cy="15" r="15" fill="#3d9c4b"/><path d="M15 0a15 15 0 0 1 13 7.500H15z" fill="#e8453c"/><path d="M2 7.500A15 15 0 0 1 15 0v15z" fill="#e8453c"/><path d="M28 7.500A15 15 0 0 1 15 30z" fill="#f5c33b"/><circle cx="15" cy="15" r="6.500" fill="#4a8ef0" stroke="#fff" stroke-width="1.500"/><circle cx="23" cy="24" r="9" fill="#0d5a9c"/><text x="23" y="28.500" class="ch-s">S</text></svg></div>
  <div class="slot run"><svg width="32" height="32" viewBox="0 0 32 32"><path d="M3 29l2-7A13.500 13.500 0 1 1 10.500 27.500z" fill="#25c45e"/><path d="M6.500 25l1.200-4A11 11 0 1 1 11 24z" fill="#27282c"/><path d="M11 9l2.500-.5 2 4-1.500 1.500c1 2 3 4 5 5l1.500-1.500 4 2-.5 2.500c-3 2-8 0-11-3s-4-7-2-10z" fill="#25c45e"/></svg></div>
  <div class="slot active"><div class="tabsq"><svg width="28" height="28"><use href="#logo"/></svg></div></div>
  <div class="tray">
    <svg class="weather" width="32" height="40" viewBox="0 0 32 40"><path d="M12 12c-4 0-6-4-5-8-3 2-5 6-4 9 1 4 6 5 9 3z" fill="#f2a33a"/><path d="M4 26c0-5 4-8 6-14 3 4 6 5 8 3 3 4 8 7 8 12 0 9-5 9-6 5-1 6-6 6-7 1-2 5-9 3-9-7z" fill="#5a9df0"/><path d="M13 22c2 3 2 8 0 12M20 24c2 3 2 6 1 9" stroke="#c7dcf8" stroke-width="2" fill="none"/><circle cx="23" cy="10" r="8" fill="#d12c2c"/><text x="23" y="14" class="badge1">1</text></svg>
    <span class="wtxt">29°C</span><span class="wtxt w2">Rain showers</span>
    <svg class="tray-ic" width="180" height="30" viewBox="0 0 180 30" fill="none" stroke="#fff" stroke-width="1.200">
      <path d="M3 19l7-8 7 8" stroke-width="1.400"/>
      <rect x="33" y="9" width="8" height="13" rx="1"/><path d="M34 6h6M34 25h6M41 12l4-2v10l-4-2"/>
      <path d="M64 21a4 4 0 0 1 .5-8 6 6 0 0 1 11-1 4.500 4.500 0 0 1 1.500 9z" fill="#e6e6e6" stroke="none"/>
      <rect x="92" y="8" width="17" height="12"/><rect x="94" y="10" width="6" height="8" fill="#fff"/><circle cx="104" cy="22" r="6" fill="#108a2e" stroke="none"/><path d="M104 18.500c-2 2-2 5 0 6.500 2-1.500 2-4.500 0-6.500z" fill="#fff" stroke="none"/>
      <path d="M122 23c1-7 6-11 13-12M126 23c1-4 4-7 9-8M130 23c.6-2 2-3.500 5-4"/><circle cx="134" cy="22" r="1" fill="#fff"/>
      <path d="M151 12h3l5-4v17l-5-4h-3zM162 11c2 3 2 8 0 11M165 8c3 4 3 13 0 17"/>
    </svg>
    <span class="lang">ENG</span>
    <div class="clock"><span>20:45</span><span>22-09-2024</span></div>
    <svg class="notif" width="32" height="40" viewBox="0 0 32 40"><path d="M3 5h19v14h-12l-3 5v-5H3z" fill="#fff"/><path d="M6 9h13M6 12.500h13M6 16h13" stroke="#222" stroke-width="1.200"/><circle cx="20" cy="26" r="10.500" fill="#333" stroke="#bbb"/><text x="20" y="31" class="notif-n">1</text></svg>
  </div>
</footer>

<div class="watermark"><span class="wm1">Activate Windows</span><span class="wm2">Go to Settings to activate Windows.</span></div>
</body>
</html>
```

FILE: styles.css
```css
*{box-sizing:border-box}
html,body{margin:0;padding:0}
html{height:1080px;overflow:hidden}
body{width:1920px;height:1080px;overflow:hidden;display:flex;flex-direction:column;position:relative;background:#fff;font-family:"Noto Sans",sans-serif;color:#222}
.defs{position:absolute}
ul{list-style:none;margin:0;padding:0}
h3{margin:0;font-weight:600}

.titlebar{height:27px;flex:none;display:flex;align-items:center;padding-left:3px;background:#fff}
.tb-logo{width:20px;height:20px;margin-right:4px;background:#f1f1f1}
.tb-title{font-size:14.400px;color:#222}
.winbtns{margin-left:auto;padding-right:10px;height:20px}
.menubar{height:28px;flex:none;display:flex;align-items:center;gap:16.500px;padding:2px 0 0 8px;font-size:14px;color:#111;border-bottom:1px solid #e4e4e4}
.banner{height:50px;flex:none;background:#cfe8fd;display:flex;align-items:center;padding:0 58px 2px 26px;font-family:Lato,sans-serif;font-size:18px;color:#1f6fa3}
.megaphone{margin-right:14px}
.upgrade{margin-left:auto;color:#2a82bd}

.toolbar{height:50px;flex:none;background:#f4f4f4;display:flex;align-items:center;justify-content:space-between;padding-right:30px}
.tools{display:block}
.showme{display:flex;align-items:center;gap:6px;font-family:Lato,sans-serif;font-size:17.500px;color:#222;padding-bottom:2px}

.main{height:812px;flex:none;display:flex;overflow:hidden}
.sidebar{width:262px;flex:none;background:#fcfcfc;border-right:1px solid #dedede;display:flex;flex-direction:column;font-family:"Open Sans",sans-serif;color:#333}
.sb-tabs{height:32px;display:flex;border-top:1px solid #ddd}
.sb-tab{font-size:16.500px;display:flex;align-items:center;padding-bottom:2px}
.sb-tab.active{width:146px;padding-left:22px;font-weight:700;color:#222;font-size:16px}
.sb-tab:not(.active){flex:1;border-left:1px solid #ccc;border-bottom:1px solid #ccc;padding-left:16px;padding-bottom:0;color:#333}
.chev{margin-left:auto;margin-right:8px;font-size:18px;color:#666;line-height:1;margin-top:-6px}
.sb-device{height:119px;padding-top:13px;border-bottom:1px solid #d5d5d5}
.dev-row{height:26px;margin:0 18px;display:flex;align-items:center;font-size:16px;color:#444;padding-left:15px}
.dev-row.selected{background:#e4e4e4}
.dev-row.phone{padding-left:25px}
.dev-btn{margin:12px 0 0 50px;width:160px;height:28px;border:1px solid #ccc;border-radius:2px;font-size:15px;display:flex;align-items:center;justify-content:center;color:#555;background:#fff}
.sb-size{height:77px;padding:4px 18px 0;border-bottom:1px solid #d5d5d5}
.sb-size h3,.sb-sheets h3{font-size:16px;line-height:20px;color:#333}
.size-select{height:22px;margin-top:7px;border-bottom:1px solid #bbb;display:flex;align-items:center;justify-content:space-between;font-size:15.500px;color:#444;white-space:nowrap}
.caret{width:0;height:0;border:4px solid transparent;border-top:5px solid #666;margin-top:5px;margin-right:1px}
.sb-sheets{height:292px;padding-top:3px;border-bottom:1px solid #d5d5d5}
.sb-sheets h3{padding-left:18px}
.sheet-wrap{margin-top:9px;height:240px;display:flex;overflow:hidden}
.sheet-list{flex:1;margin-top:-16px;font-size:17px;color:#444}
.sheet-list li{height:32px;display:flex;align-items:center;padding-left:21px;white-space:nowrap}
.sheet-list svg{width:18px;height:18px;margin-right:8px;flex:none}
.sheet-scroll{width:12px;background:#f3f3f3;display:flex;flex-direction:column;justify-content:flex-end}
.sheet-thumb{height:128px;background:#dedede}
.sb-objects{flex:1;padding:5px 12px 0}
.sb-objects h3{font-size:14.500px;line-height:20px;font-weight:600;color:#333}
.obj-wrap{margin-top:7px;height:185px;display:flex}
.obj-list{flex:1;font-size:15px;color:#444;padding-top:6px}
.obj-list li{height:25px;display:flex;align-items:center;padding-left:5px}
.obj-list svg{width:16px;height:16px;margin-right:8px;flex:none}
.obj-scroll{width:17px;background:#f1f1f1;position:relative;display:flex;flex-direction:column;align-items:center;justify-content:space-between;padding:5px 0}
.obj-thumb{position:absolute;top:17px;left:2px;width:13px;height:84px;background:#bdbdbd}
.up{width:0;height:0;border:4px solid transparent;border-bottom:5px solid #bbb;margin-top:-3px}
.down{width:0;height:0;border:4px solid transparent;border-top:5px solid #555;margin-bottom:-3px}
.toggle{margin-top:6px;height:31px;display:flex;width:237px;font-size:14.500px}
.tog{flex:1;display:flex;align-items:center;justify-content:center;border:1px solid #999;border-left:0;border-radius:0 3px 3px 0;background:#fff;font-weight:500;color:#333}
.tog.on{flex:none;width:119px;background:#05668d;color:#fff;font-weight:700;border:0;border-radius:3px 0 0 3px}
.check{display:flex;align-items:center;margin:10px 0 0 8px;font-size:14.500px;color:#444}
.cbox{width:17px;height:17px;border:1px solid #333;border-radius:2px;margin-right:8px;background:#fff}

.canvas{flex:1;background:#05022f;padding:12px 12px 0 12px;position:relative;color:#fff;min-width:0}
.box{border:1px solid #fff;display:flex;align-items:center;justify-content:center;text-align:center}
.head-title{height:40px;width:1632px;font-size:25.600px;font-weight:300;padding-bottom:2px}
.kpis{margin-top:19px;width:1632px;display:grid;grid-template-columns:repeat(4,400.500px);column-gap:10px}
.kpi{display:flex;flex-direction:column;gap:3px}
.kpi-t{height:41px;font-size:26.500px;font-weight:300;padding-bottom:5px;white-space:nowrap}
.kpi-v{height:35px;justify-content:flex-end;padding:0 3px 2px 0;font-size:31px;font-weight:500}
.zones{margin-top:8px;display:grid;grid-template-columns:598px 379px 542px;column-gap:8px;height:640px}
.col{display:flex;flex-direction:column;gap:4px;min-width:0}
.col.mid{gap:3.500px}
.ttl{font-size:24.800px;line-height:35px;padding:0 8px 5px;font-weight:400}
.t75{height:75px}.t76{height:76px}.t40{height:40px}.t41{height:41px}
.mt9{margin-top:5px}
.w520{width:520px}
.chart{display:block;font-family:"Noto Sans",sans-serif}
.scatter{height:237px;flex:none}
.c-head text{font-size:16.500px;fill:#fff;text-anchor:middle}
.c-y text{font-size:17px;fill:#fff;text-anchor:end}
.c-rot text{font-size:16.500px;fill:#fff;text-anchor:end}
.c-lab{transform:translateY(-1px)}
.c-lab text{font-size:15px;fill:#d9d9e4;text-anchor:middle}
.bars{height:271px;flex-direction:column;align-items:stretch;justify-content:flex-start;text-align:left}
.bar-row{height:24px;display:flex}
.bar-row:last-child{border-bottom:1px solid #fff}
.bl{width:80px;flex:none;border-right:1px solid #fff;border-bottom:1px solid #fff;text-align:right;padding-right:5px;font-size:17px;line-height:24px}
.bar-row:last-child .bl{border-bottom:0}
.bt{flex:1;display:flex;align-items:center}
.bt i{display:block;height:18px;background:#4f7ba8}
.bar-axis{flex:1;display:flex;font-size:17px}
.axis-spacer{width:80px;border-right:1px solid #fff;flex:none}
.tick{width:74px;text-align:center;position:relative;padding-top:6px;line-height:24px}
.tick.zero{width:37px;text-align:left;padding-left:2px}
.tick b{position:absolute;left:50%;top:0;width:1px;height:4px;background:#fff}
.d1{height:179px}.d2{height:136px}.d3{height:140px}
.map{height:272px;position:relative;overflow:hidden;display:block;text-align:left}
.mapsvg{width:100%;height:100%;display:block}
.legend{position:absolute;left:283px;top:174px;width:170px;font-size:15px;color:#ccc}
.leg-title{line-height:20px;white-space:nowrap}
.leg-grad{margin:6px 0 0 3px;height:16px;width:155px;background:linear-gradient(90deg,#b9e0d5 0,#4aa3bd 55%,#2c5a85 100%);border:1px solid #a9a79e}
.leg-labels{display:flex;justify-content:space-between;width:156px;margin-left:3px;line-height:22px;color:#eee;font-size:16px}
.attrib{position:absolute;left:2px;bottom:0;height:19px;padding:0 3px;background:#3a3a3a;font-size:12.500px;line-height:19px;color:#fff;white-space:nowrap}
.tblwrap{display:flex;height:236px}
.tblleft{width:520px}
.tblclip{height:215px;overflow:hidden}
table{border-collapse:collapse;table-layout:fixed;width:520px;font-size:17px}
.c1{width:304px}.c2{width:140px}.c3{width:76px}
tr{height:24px}
th,td{border:1px solid #fff;padding:0;text-align:center;line-height:22px;white-space:nowrap;overflow:hidden}
th{vertical-align:top;font-size:16px;font-weight:700}
.num{text-align:right;border:0;color:#f1f7f5;font-size:17px}
.n1{background:#bfe3d6}.n2{background:#b9e0d5}.n3{background:#6db3c3}.n4{background:#a9d9d4}.n5{background:#78b9c6}.n6{background:#61acbf}.n7{background:#8fc6cb}.n8{background:#93c9cc}.n9{background:#4aa3bd}
.hscroll{height:21px;background:#f0f0f0;display:flex;align-items:center;justify-content:space-between}
.hthumb{flex:1;height:19px;background:#c8c8c8}
.hscroll svg{flex:none}
.vscroll{width:22px;height:215px;background:#f0f0f0;display:flex;flex-direction:column;justify-content:space-between;position:relative}
.vthumb{position:absolute;top:21px;left:1px;width:19px;height:22px;background:#c8c8c8}

.float-tab{position:absolute;left:1575px;top:141px;width:51px;height:12px;background:#2e4e75;border-radius:2px 2px 0 0}
.float-tab::before{content:"";position:absolute;left:6px;right:6px;top:4px;height:5px;border-top:1px solid #fff;border-bottom:1px solid #fff}
.float-btns{position:absolute;left:1531px;top:153px;width:16px;height:62px;background:#2e4e75;line-height:0}
.filters{position:absolute;left:1549px;top:153px;width:101px;height:651px;border:2px solid #2c4a75;background:#05022f;display:flex;flex-direction:column;padding:0 1px}
.filter{height:61px;border-bottom:2px dashed #2c4a75;padding:2px 0 0 4px;flex:none}
.f-l{font-size:14.500px;line-height:22px;color:#d4d4de;white-space:nowrap}
.f-i{margin:4px 0 0 3px;width:84px;height:25px;background:#74708c;border:1px solid #c0c0cc;display:flex;font-size:15px}
.f-all{flex:1;padding-left:4px;color:#b7b5c6;line-height:22px}
.f-d{width:22px;border-left:1px solid #c0c0cc;display:flex;align-items:center;justify-content:center}
.f-d i{width:0;height:0;border:4px solid transparent;border-top:5px solid #ddd;margin-top:5px}
.hatch{flex:1;background:repeating-linear-gradient(45deg,#05022f 0 3px,#25305f 3px 4px)}

.tabs{height:38px;flex:none;background:#e6e6e6;display:flex;border-top:1px solid #ccc;border-bottom:1px solid #d0d0d0;font-size:15px;color:#555}
.tab{display:flex;align-items:center;justify-content:flex-start;padding-left:7px;border-right:1px solid #d0d0d0;white-space:nowrap;gap:5px;overflow:hidden;flex:none}
.t1{width:162px;padding-left:10px;gap:7px}.t2{width:76px;padding-left:1px}.t3{width:251px}.t4{width:124px;background:#fff;font-weight:700;color:#444}.t5{width:134px}.t6{width:136px}.t7{width:244px}.t8{width:241px}.t9{width:250px}.t10{width:206px}
.tab-ic{flex:none;width:32px;display:flex;align-items:center;justify-content:center;border-right:1px solid #d0d0d0}
.status{height:25px;flex:none;background:#ececec;display:flex;align-items:stretch}
.sdiv{width:1px;background:#dcdcdc;flex:none}
.s1{margin-left:1501px}.s2{margin-left:157px}.s3{margin-left:30px}.s4{margin-left:31px}
.nav{flex:none;margin-left:auto;margin-right:2px}
.bigview{width:16px;height:14px;background:#777;margin:5px 2px 0 0;flex:none}

.taskbar{height:50px;flex:none;background:#26211f;display:flex;align-items:center;color:#fff;overflow:hidden}
.start{width:60px;flex:none;display:flex;justify-content:center}
.search{width:360px;height:50px;flex:none;background:#f3f3f3;border:1px solid #d0d0d0;border-width:1px 1px 0 0;display:flex;align-items:center;padding:0 0 2px 15px;color:#333;overflow:hidden;position:relative}
.search span{margin-left:13px;white-space:nowrap;font-size:18px}
.bing{position:absolute;right:0;top:0}
.slot{width:62px;height:50px;display:flex;align-items:center;justify-content:center;position:relative;flex:none}
.slot.run::after,.slot.active::after{content:"";position:absolute;left:5px;right:6px;bottom:0;height:3px;background:#7db4dc}
.slot.active{background:#59555b}
.slot.active::after{left:0;right:0}
.tabsq{width:28px;height:34px;background:#f4f4f4;display:flex;align-items:center;justify-content:center}
.ch-s{font-size:10px;fill:#cfe;text-anchor:middle;font-weight:700}
.badge1{font-size:11px;fill:#fff;text-anchor:middle}
.notif-n{font-size:14px;fill:#fff;text-anchor:middle}
.tray{flex:1;display:flex;align-items:center;padding-left:405px;font-size:17px;white-space:nowrap}
.weather{flex:none;margin-right:8px;margin-top:-2px}
.wtxt{width:48px;flex:none}
.w2{width:133px}
.tray-ic{flex:none}
.lang{font-size:14.500px;margin-left:3px;width:38px;flex:none}
.clock{width:90px;flex:none;display:flex;flex-direction:column;align-items:center;font-size:14px;line-height:24px}
.notif{flex:none;margin-left:14px;margin-top:6px}

.watermark{position:absolute;left:1555px;top:925px;display:flex;flex-direction:column;color:rgba(140,140,140,.55);white-space:nowrap;pointer-events:none}
.wm1{font-size:24px;line-height:30px}
.wm2{font-size:15.500px;line-height:30px}
```
